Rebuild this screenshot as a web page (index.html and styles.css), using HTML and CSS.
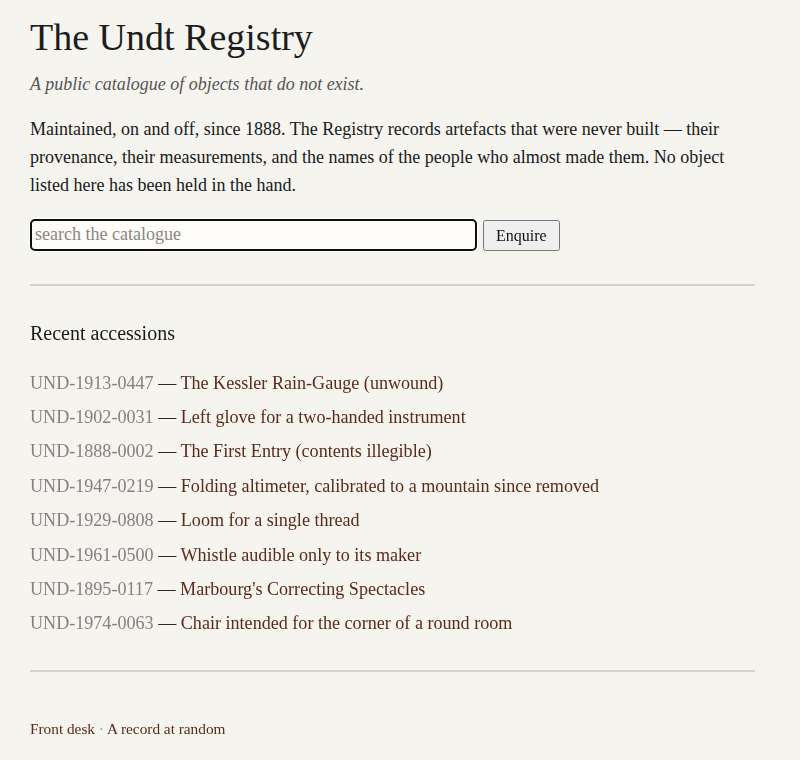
FILE: index.html
```html
<!DOCTYPE html>
<html>
<head>
    <title>The Undt Registry</title>
    <link rel="stylesheet" href="styles.css">
</head>
<body>
    <div class="page">
        <h1>The Undt Registry</h1>
        <p class="tagline">A public catalogue of objects that do not exist.</p>

        <p class="intro">Maintained, on and off, since 1888. The Registry records artefacts that were never built — their provenance, their measurements, and the names of the people who almost made them. No object listed here has been held in the hand.</p>

        <form class="search" action="#">
            <input type="text" name="q" placeholder="search the catalogue" autofocus>
            <button type="submit">Enquire</button>
        </form>

        <hr>

        <h2>Recent accessions</h2>
        <ul class="accessions">
            <li><span class="ref">UND-1913-0447</span> — <a href="#">The Kessler Rain-Gauge (unwound)</a></li>
            <li><span class="ref">UND-1902-0031</span> — <a href="#">Left glove for a two-handed instrument</a></li>
            <li><span class="ref">UND-1888-0002</span> — <a href="#">The First Entry (contents illegible)</a></li>
            <li><span class="ref">UND-1947-0219</span> — <a href="#">Folding altimeter, calibrated to a mountain since removed</a></li>
            <li><span class="ref">UND-1929-0808</span> — <a href="#">Loom for a single thread</a></li>
            <li><span class="ref">UND-1961-0500</span> — <a href="#">Whistle audible only to its maker</a></li>
            <li><span class="ref">UND-1895-0117</span> — <a href="#">Marbourg's Correcting Spectacles</a></li>
            <li><span class="ref">UND-1974-0063</span> — <a href="#">Chair intended for the corner of a round room</a></li>
        </ul>

        <hr class="end">

        <p class="footer"><a href="#">Front desk</a> <span class="sep">·</span> <a href="#">A record at random</a></p>
    </div>
</body>
</html>
```

FILE: styles.css
```css
body { margin: 0; background: #f5f4ef; color: #1a1a1a; font-family: "Liberation Serif", "Times New Roman", serif; }
.page { max-width: 725px; padding: 15px 30px 20px; }
h1 { font-size: 38px; font-weight: normal; line-height: 1.2; margin: 0; color: #1c1c1c; }
.tagline { font-size: 18px; font-style: italic; color: #555; line-height: 1.5; margin: 10px 0 0; }
.intro { font-size: 18px; line-height: 28px; margin: 17px 0 0; }
.search { display: flex; align-items: flex-end; gap: 6px; margin-top: 20px; }
.search input { flex: 0 0 447px; box-sizing: border-box; height: 32px; padding: 2px 4px; font-family: inherit; font-size: 18px; background: #fefdf9; border: 1px solid #999; border-radius: 4px; }
.search input::placeholder { color: #8a8680; }
.search button { font-family: inherit; font-size: 16px; height: 31px; padding: 5px 11px 3px; color: #111; }
hr { border: 0; border-top: 2px solid #d9d3c7; margin: 33px 0 0; }
h2 { font-size: 20px; font-weight: normal; line-height: 26px; margin: 34px 0 0; }
.accessions { list-style: none; padding: 0; margin: 20px 0 0; }
.accessions li { font-size: 18.1px; line-height: 28.4px; padding: 3px 0; }
.ref { color: #858080; }
a { color: #5c2a1a; text-decoration: none; }
hr.end { margin-top: 29px; }
.footer { font-size: 15.3px; line-height: 24px; margin: 45px 0 0; }
.sep { color: #888; }
```
